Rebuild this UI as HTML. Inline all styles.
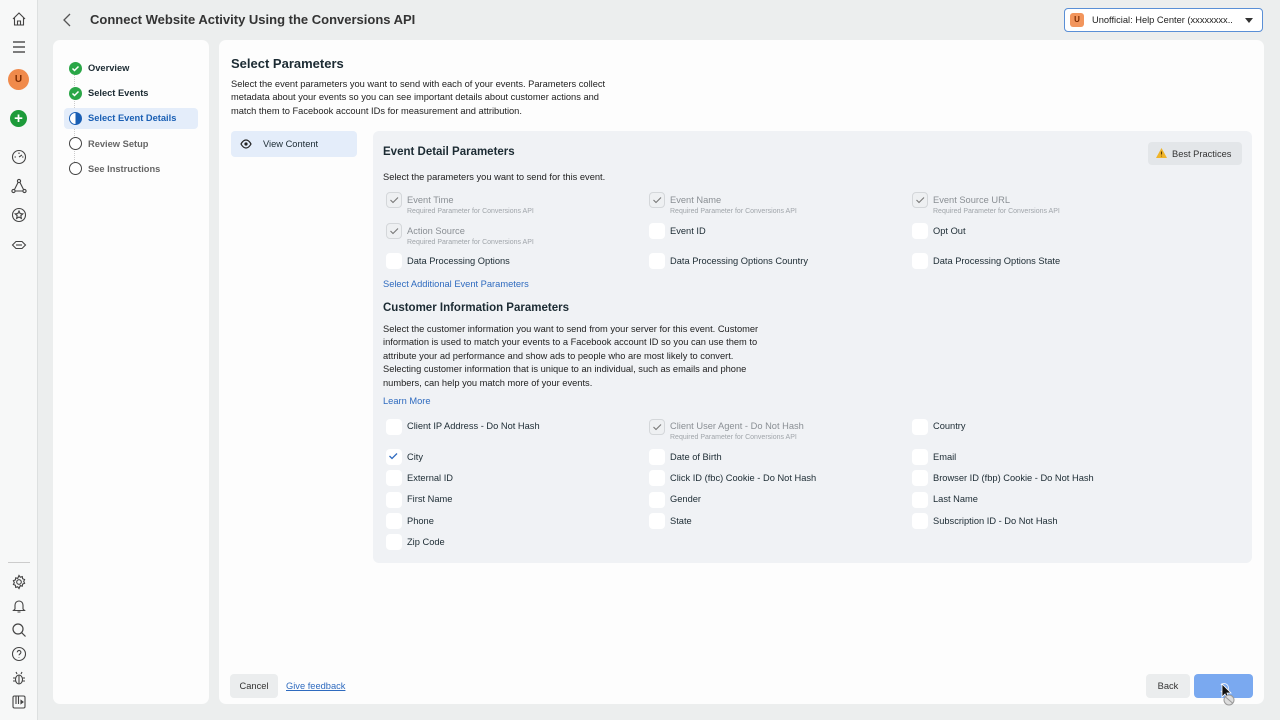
<!DOCTYPE html>
<html><head><style>
*{margin:0;padding:0;box-sizing:border-box}
body{width:1280px;height:720px;background:#eceeee;font-family:"Liberation Sans",sans-serif;color:#1c2b33;position:relative;overflow:hidden;font-size:9.3px}
.a{position:absolute}
.rail{left:0;top:0;width:38px;height:720px;background:#f7f8f8;border-right:1px solid #dde0e0}
.card{background:#fdfdfd;border-radius:7px}
.cb{position:absolute;width:16px;height:16px;background:#fff;border-radius:4px}
.cb.d{background:#eef0f2;border:1px solid #d4d7da}
.cb svg{position:absolute;left:2px;top:2px}
.lb{position:absolute;font-size:9.3px;color:#1c2b33;white-space:nowrap}
.lb.g{color:#8a8f94}
.lb small{display:block;font-size:7px;color:#a0a5aa;margin-top:3px}
.ic{position:absolute;left:11px;width:16px;height:16px}
</style></head><body>
<div class="a rail">
<svg class="ic" style="top:11px" viewBox="0 0 16 16" fill="none" stroke="#444" stroke-width="1.1"><path d="M2 8L8 2l6 6M3.5 6.5V14h9V6.5M6.5 14v-4h3v4"/></svg>
<svg class="ic" style="top:39px" viewBox="0 0 16 16" stroke="#333" stroke-width="1.3"><path d="M2 3h12M2 8h12M2 13h12"/></svg>
<div class="a" style="left:8px;top:69px;width:21px;height:21px;border-radius:50%;background:#f08a4b;color:#7a2a00;font-size:10px;font-weight:bold;text-align:center;line-height:21px">U</div>
<div class="a" style="left:10px;top:110px;width:17px;height:17px;border-radius:50%;background:#1d9b3a;color:#fff;font-size:15px;font-weight:bold;text-align:center;line-height:17px">+</div>
<svg class="ic" style="top:149px" viewBox="0 0 16 16" fill="none" stroke="#444" stroke-width="1.1"><circle cx="8" cy="8" r="6.5"/><path d="M8 8l3-2M3.5 8h1.5M11 8h1.5M8 3.5V5"/></svg>
<svg class="ic" style="top:178px" viewBox="0 0 16 16" fill="none" stroke="#444" stroke-width="1.1"><circle cx="8" cy="3" r="1.6"/><circle cx="2.5" cy="13" r="1.6"/><circle cx="13.5" cy="13" r="1.6"/><path d="M7 4.5L3.5 11.5M9 4.5l3.5 7M4 13h8"/></svg>
<svg class="ic" style="top:207px" viewBox="0 0 16 16" fill="none" stroke="#444" stroke-width="1.1"><circle cx="8" cy="8" r="6.5"/><path d="M8 4l1.2 2.6 2.6.3-2 1.8.6 2.7L8 10l-2.4 1.4.6-2.7-2-1.8 2.6-.3z"/></svg>
<svg class="ic" style="top:237px" viewBox="0 0 16 16" fill="none" stroke="#444" stroke-width="1.1"><path d="M1.5 8L5 4.5h6L14.5 8 11 11.5H5z"/><path d="M5 8h6"/></svg>
<div class="a" style="left:8px;top:562px;width:22px;height:1px;background:#ccc"></div>
<svg class="ic" style="top:574px" viewBox="0 0 16 16" fill="none" stroke="#444" stroke-width="1.1"><circle cx="8" cy="8" r="2.3"/><path d="M8 1.5l1.3 1.7 2-.6.3 2.1 2 .8-.9 1.9.9 1.9-2 .8-.3 2.1-2-.6L8 14.5l-1.3-1.7-2 .6-.3-2.1-2-.8.9-1.9-.9-1.9 2-.8.3-2.1 2 .6z"/></svg>
<svg class="ic" style="top:598px" viewBox="0 0 16 16" fill="none" stroke="#444" stroke-width="1.1"><path d="M4 11V7a4 4 0 018 0v4l1.5 1.5h-11zM6.5 14h3"/></svg>
<svg class="ic" style="top:622px" viewBox="0 0 16 16" fill="none" stroke="#444" stroke-width="1.2"><circle cx="7" cy="7" r="5"/><path d="M10.5 10.5l4 4"/></svg>
<svg class="ic" style="top:646px" viewBox="0 0 16 16" fill="none" stroke="#444" stroke-width="1.1"><circle cx="8" cy="8" r="6.5"/><path d="M6.3 6.3a1.8 1.8 0 113 1.3c-.8.5-1.3.9-1.3 1.7M8 11v.5"/></svg>
<svg class="ic" style="top:670px" viewBox="0 0 16 16" fill="none" stroke="#444" stroke-width="1.1"><ellipse cx="8" cy="9.5" rx="3.5" ry="4.5"/><path d="M6 4l-1-2M10 4l1-2M4.5 8H2M4.5 11H2M11.5 8H14M11.5 11H14M8 5v9"/></svg>
<svg class="ic" style="top:694px" viewBox="0 0 16 16" fill="none" stroke="#444" stroke-width="1.1"><rect x="2" y="2" width="12" height="12" rx="1.5"/><path d="M5 2v8M7.5 2v8"/><path d="M10 6.5l2 1.5-2 1.5z" fill="#444"/></svg>
</div>

<svg class="a" style="left:62px;top:13px" width="12" height="14" viewBox="0 0 12 14" fill="none" stroke="#555" stroke-width="1.3"><path d="M8 1L2 7l6 6"/></svg>
<div class="a" style="left:90px;top:12px;font-size:13px;font-weight:bold;color:#333">Connect Website Activity Using the Conversions API</div>

<div class="a" style="left:1064px;top:8px;width:199px;height:24px;border:1px solid #5a8fd6;border-radius:4px;background:#fff">
<div class="a" style="left:5px;top:4px;width:14px;height:14px;border-radius:3px;background:#f2955c;color:#7a2a00;font-size:8px;font-weight:bold;text-align:center;line-height:14px">U</div>
<div class="a" style="left:27px;top:6px;font-size:9.3px;color:#222">Unofficial: Help Center (xxxxxxxx..</div>
<div class="a" style="left:180px;top:9px;width:0;height:0;border-left:4px solid transparent;border-right:4px solid transparent;border-top:5px solid #333"></div>
</div>

<div class="a card" style="left:53px;top:40px;width:156px;height:664px">
<div class="a" style="left:21px;top:33px;width:1px;height:95px;border-left:1px dotted #ccc"></div>
<div class="a" style="left:11px;top:68px;width:134px;height:21px;background:#e4edfa;border-radius:4px"></div>
<div class="a" style="left:16px;top:22px;width:13px;height:13px;border-radius:50%;background:#2aa647"><svg width="13" height="13"><path d="M3.5 6.5l2 2 4-4" stroke="#fff" stroke-width="1.5" fill="none"/></svg></div>
<div class="a" style="left:35px;top:23px;font-size:9.3px;font-weight:bold">Overview</div>
<div class="a" style="left:16px;top:47px;width:13px;height:13px;border-radius:50%;background:#2aa647"><svg width="13" height="13"><path d="M3.5 6.5l2 2 4-4" stroke="#fff" stroke-width="1.5" fill="none"/></svg></div>
<div class="a" style="left:35px;top:48px;font-size:9.3px;font-weight:bold">Select Events</div>
<div class="a" style="left:16px;top:72px;width:13px;height:13px;border-radius:50%;border:1.3px solid #1a5fb4;background:linear-gradient(90deg,#fff 50%,#1a5fb4 50%)"></div>
<div class="a" style="left:35px;top:73px;font-size:9.3px;font-weight:bold;color:#1a5fb4">Select Event Details</div>
<div class="a" style="left:16px;top:97px;width:13px;height:13px;border-radius:50%;border:1.3px solid #444;background:#fff"></div>
<div class="a" style="left:35px;top:99px;font-size:9.3px;font-weight:bold;color:#666">Review Setup</div>
<div class="a" style="left:16px;top:122px;width:13px;height:13px;border-radius:50%;border:1.3px solid #444;background:#fff"></div>
<div class="a" style="left:35px;top:124px;font-size:9.3px;font-weight:bold;color:#666">See Instructions</div>
</div>

<div class="a card" style="left:219px;top:40px;width:1045px;height:664px">
<div class="a" style="left:12px;top:16px;font-size:13px;font-weight:bold">Select Parameters</div>
<div class="a" style="left:12px;top:38px;font-size:9.3px;line-height:13.4px;white-space:nowrap;color:#222">Select the event parameters you want to send with each of your events. Parameters collect<br>metadata about your events so you can see important details about customer actions and<br>match them to Facebook account IDs for measurement and attribution.</div>
<div class="a" style="left:12px;top:91px;width:126px;height:26px;background:#e4edfa;border-radius:4px">
<svg class="a" style="left:9px;top:8px" width="12" height="10" viewBox="0 0 12 10"><path d="M1 5c1.5-2.7 3.2-4 5-4s3.5 1.3 5 4c-1.5 2.7-3.2 4-5 4S2.5 7.7 1 5z" fill="none" stroke="#222" stroke-width="1.2"/><circle cx="6" cy="5" r="1.6" fill="#222"/></svg>
<div class="a" style="left:32px;top:8px;font-size:9.3px">View Content</div></div>
<div class="a" style="left:154px;top:91px;width:879px;height:432px;background:#f0f2f5;border-radius:6px"></div>
<div class="a" style="left:929px;top:102px;width:94px;height:23px;background:#e3e6e9;border-radius:4px">
<svg class="a" style="left:7px;top:5px" width="13" height="12" viewBox="0 0 13 12"><path d="M6.5 1L12 11H1z" fill="#f0b429"/><path d="M6.5 4.5v3M6.5 8.8v.6" stroke="#5a3b00" stroke-width="1.1"/></svg>
<div class="a" style="left:24px;top:7px;font-size:9.3px;color:#333">Best Practices</div></div>
<div class="a" style="left:11px;top:634px;width:48px;height:24px;background:#ebedee;border-radius:4px;font-size:9.3px;text-align:center;line-height:24px;color:#333">Cancel</div>
<div class="a" style="left:67px;top:641px;font-size:9.3px;color:#2f6bbf;text-decoration:underline">Give feedback</div>
<div class="a" style="left:927px;top:634px;width:44px;height:24px;background:#ebedee;border-radius:4px;font-size:9.3px;text-align:center;line-height:24px;color:#333">Back</div>
<div class="a" style="left:975px;top:634px;width:59px;height:24px;background:#7aa9f0;border-radius:4px"></div>
</div>

<div class="a" style="left:383px;top:146px;font-size:11.5px;font-weight:bold">Event Detail Parameters</div>
<div class="a" style="left:383px;top:172px;font-size:9.3px;color:#222">Select the parameters you want to send for this event.</div>

<div class="cb d" style="left:386px;top:192px"><svg width="10" height="10"><path d="M1.5 5l2.5 2.5 5-5" stroke="#777" stroke-width="1.1" fill="none"/></svg></div>
<div class="lb g" style="left:407px;top:195px">Event Time<small>Required Parameter for Conversions API</small></div>
<div class="cb d" style="left:649px;top:192px"><svg width="10" height="10"><path d="M1.5 5l2.5 2.5 5-5" stroke="#777" stroke-width="1.1" fill="none"/></svg></div>
<div class="lb g" style="left:670px;top:195px">Event Name<small>Required Parameter for Conversions API</small></div>
<div class="cb d" style="left:912px;top:192px"><svg width="10" height="10"><path d="M1.5 5l2.5 2.5 5-5" stroke="#777" stroke-width="1.1" fill="none"/></svg></div>
<div class="lb g" style="left:933px;top:195px">Event Source URL<small>Required Parameter for Conversions API</small></div>
<div class="cb d" style="left:386px;top:223px"><svg width="10" height="10"><path d="M1.5 5l2.5 2.5 5-5" stroke="#777" stroke-width="1.1" fill="none"/></svg></div>
<div class="lb g" style="left:407px;top:226px">Action Source<small>Required Parameter for Conversions API</small></div>
<div class="cb" style="left:649px;top:223px"></div><div class="lb" style="left:670px;top:226px">Event ID</div>
<div class="cb" style="left:912px;top:223px"></div><div class="lb" style="left:933px;top:226px">Opt Out</div>
<div class="cb" style="left:386px;top:253px"></div><div class="lb" style="left:407px;top:256px">Data Processing Options</div>
<div class="cb" style="left:649px;top:253px"></div><div class="lb" style="left:670px;top:256px">Data Processing Options Country</div>
<div class="cb" style="left:912px;top:253px"></div><div class="lb" style="left:933px;top:256px">Data Processing Options State</div>
<div class="a" style="left:383px;top:279px;font-size:9.3px;color:#2f6bbf">Select Additional Event Parameters</div>

<div class="a" style="left:383px;top:302px;font-size:11.5px;font-weight:bold">Customer Information Parameters</div>
<div class="a" style="left:383px;top:323px;white-space:nowrap;font-size:9.3px;line-height:13.4px;color:#222">Select the customer information you want to send from your server for this event. Customer<br>information is used to match your events to a Facebook account ID so you can use them to<br>attribute your ad performance and show ads to people who are most likely to convert.<br>Selecting customer information that is unique to an individual, such as emails and phone<br>numbers, can help you match more of your events.</div>
<div class="a" style="left:383px;top:396px;font-size:9.3px;color:#2f6bbf">Learn More</div>

<div class="cb" style="left:386px;top:419px"></div><div class="lb" style="left:407px;top:421px">Client IP Address - Do Not Hash</div>
<div class="cb d" style="left:649px;top:419px"><svg width="10" height="10"><path d="M1.5 5l2.5 2.5 5-5" stroke="#777" stroke-width="1.1" fill="none"/></svg></div>
<div class="lb g" style="left:670px;top:421px">Client User Agent - Do Not Hash<small>Required Parameter for Conversions API</small></div>
<div class="cb" style="left:912px;top:419px"></div><div class="lb" style="left:933px;top:421px">Country</div>
<div class="cb" style="left:386px;top:449px"><svg width="10" height="10"><path d="M1.5 5l2.5 2.5 5-5" stroke="#2f6bbf" stroke-width="1.3" fill="none"/></svg></div><div class="lb" style="left:407px;top:452px">City</div>
<div class="cb" style="left:649px;top:449px"></div><div class="lb" style="left:670px;top:452px">Date of Birth</div>
<div class="cb" style="left:912px;top:449px"></div><div class="lb" style="left:933px;top:452px">Email</div>
<div class="cb" style="left:386px;top:470px"></div><div class="lb" style="left:407px;top:473px">External ID</div>
<div class="cb" style="left:649px;top:470px"></div><div class="lb" style="left:670px;top:473px">Click ID (fbc) Cookie - Do Not Hash</div>
<div class="cb" style="left:912px;top:470px"></div><div class="lb" style="left:933px;top:473px">Browser ID (fbp) Cookie - Do Not Hash</div>
<div class="cb" style="left:386px;top:492px"></div><div class="lb" style="left:407px;top:494px">First Name</div>
<div class="cb" style="left:649px;top:492px"></div><div class="lb" style="left:670px;top:494px">Gender</div>
<div class="cb" style="left:912px;top:492px"></div><div class="lb" style="left:933px;top:494px">Last Name</div>
<div class="cb" style="left:386px;top:513px"></div><div class="lb" style="left:407px;top:516px">Phone</div>
<div class="cb" style="left:649px;top:513px"></div><div class="lb" style="left:670px;top:516px">State</div>
<div class="cb" style="left:912px;top:513px"></div><div class="lb" style="left:933px;top:516px">Subscription ID - Do Not Hash</div>
<div class="cb" style="left:386px;top:534px"></div><div class="lb" style="left:407px;top:537px">Zip Code</div>

<div class="a" style="left:1219px;top:683px;width:10px;height:10px;border-radius:50%;border:1.5px solid #e8eef8;border-left-color:transparent"></div>
<svg class="a" style="left:1220px;top:683px" width="18" height="24" viewBox="0 0 18 24"><path d="M2 1v13l3-3 2 5 2-1-2-5h4z" fill="#111" stroke="#fff" stroke-width="0.8"/><circle cx="9" cy="17" r="5" fill="#ddd" stroke="#999"/><path d="M5.5 14l7 6" stroke="#999"/></svg>
</body></html>
